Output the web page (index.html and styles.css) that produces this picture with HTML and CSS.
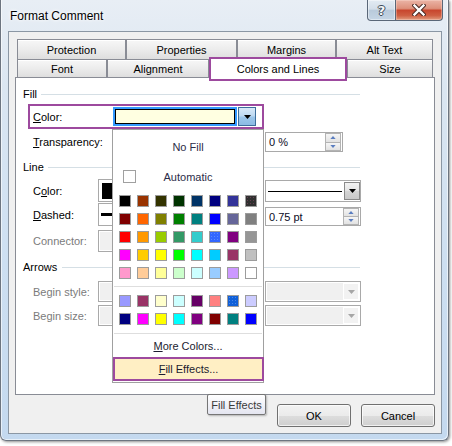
FILE: index.html
```html
<!DOCTYPE html>
<html>
<head>
<meta charset="utf-8">
<title>Format Comment</title>
<link rel="stylesheet" href="styles.css">
</head>
<body>
<div class="window">
  <div class="titlebar">
    <span class="title">Format Comment</span>
    <div class="caption">
      <div class="cbtn help"><span class="qmark">?</span></div>
      <div class="cbtn close">
        <svg width="14" height="12" viewBox="0 0 14 12"><path d="M2.5 1.5 L11.5 10.5 M11.5 1.5 L2.5 10.5" stroke="#4a2a24" stroke-width="4.4" stroke-linecap="square"/><path d="M2.5 1.5 L11.5 10.5 M11.5 1.5 L2.5 10.5" stroke="#ffffff" stroke-width="2.4" stroke-linecap="square"/></svg>
      </div>
    </div>
  </div>

  <div class="client">
    <div class="tabrow row1">
      <div class="tab t-prot">Protection</div>
      <div class="tab t-props">Properties</div>
      <div class="tab t-marg">Margins</div>
      <div class="tab t-alt">Alt Text</div>
    </div>
    <div class="tabrow row2">
      <div class="tab t-font">Font</div>
      <div class="tab t-align">Alignment</div>
      <div class="tab t-col selected">Colors and Lines</div>
      <div class="tab t-size">Size</div>
    </div>

    <div class="panel">
      <div class="section"><span>Fill</span><span class="rule"></span></div>

      <div class="fillrow">
        <span class="lbl lbl-fill"><u>C</u>olor:</span>
        <div class="colorsel">
          <div class="cs-field"><div class="cs-inner"></div></div>
          <div class="cs-btn"><svg width="7" height="4" viewBox="0 0 7 4"><path d="M0 0H7L3.5 4Z" fill="#000"/></svg></div>
        </div>
      </div>

      <div class="row trow">
        <span class="lbl lbl-fill"><u>T</u>ransparency:</span>
        <div class="slider-space"></div>
        <div class="spin s-trans">
          <span class="spin-text">0 %</span>
          <div class="spin-btns">
            <div class="sb"><svg width="7" height="4" viewBox="0 0 7 4"><path d="M0 4H7L3.5 0Z" fill="#5a7dc0"/></svg></div>
            <div class="sb"><svg width="7" height="4" viewBox="0 0 7 4"><path d="M0 0H7L3.5 4Z" fill="#5a7dc0"/></svg></div>
          </div>
        </div>
      </div>

      <div class="section s-line"><span>Line</span><span class="rule"></span></div>

      <div class="row lrow r-color">
        <span class="lbl">C<u>o</u>lor:</span>
        <div class="lfield"><div class="blacksw"></div></div>
        <span class="rlbl">Style:</span>
        <div class="dd rf-style">
          <div class="dd-content"><div class="styleline"></div></div>
          <div class="dd-btn"><svg width="7" height="4" viewBox="0 0 7 4"><path d="M0 0H7L3.5 4Z" fill="#000"/></svg></div>
        </div>
      </div>

      <div class="row lrow r-dash">
        <span class="lbl"><u>D</u>ashed:</span>
        <div class="lfield"><div class="dashline"></div></div>
        <span class="rlbl">Weight:</span>
        <div class="spin rf-weight">
          <span class="spin-text">0.75 pt</span>
          <div class="spin-btns">
            <div class="sb"><svg width="7" height="4" viewBox="0 0 7 4"><path d="M0 4H7L3.5 0Z" fill="#5a7dc0"/></svg></div>
            <div class="sb"><svg width="7" height="4" viewBox="0 0 7 4"><path d="M0 0H7L3.5 4Z" fill="#5a7dc0"/></svg></div>
          </div>
        </div>
      </div>

      <div class="row lrow r-conn">
        <span class="lbl dis">Connector:</span>
        <div class="lfield disabled"></div>
      </div>

      <div class="section s-arrows"><span>Arrows</span><span class="rule"></span></div>

      <div class="row lrow r-begin1">
        <span class="lbl dis">Begin style:</span>
        <div class="lfield disabled"></div>
        <span class="rlbl dis">End style:</span>
        <div class="dd disabled rf-dis">
          <div class="dd-content"></div>
          <div class="dd-btn"><svg width="7" height="4" viewBox="0 0 7 4"><path d="M0 0H7L3.5 4Z" fill="#a6a6a6"/></svg></div>
        </div>
      </div>

      <div class="row lrow r-begin2">
        <span class="lbl dis">Begin size:</span>
        <div class="lfield disabled"></div>
        <span class="rlbl dis">End size:</span>
        <div class="dd disabled rf-dis">
          <div class="dd-content"></div>
          <div class="dd-btn"><svg width="7" height="4" viewBox="0 0 7 4"><path d="M0 0H7L3.5 4Z" fill="#a6a6a6"/></svg></div>
        </div>
      </div>
    </div>

    <div class="buttons">
      <button class="btn">OK</button>
      <button class="btn">Cancel</button>
    </div>
  </div>

  <div class="popup">
    <div class="nofill">No Fill</div>
    <div class="auto"><span class="chk"></span><span class="auto-text">Automatic</span></div>
    <div class="grid grid1">
      <span class="sw" style="background-color:#000000"></span>
      <span class="sw" style="background-color:#993300"></span>
      <span class="sw" style="background-color:#333300"></span>
      <span class="sw" style="background-color:#003300"></span>
      <span class="sw" style="background-color:#003366"></span>
      <span class="sw" style="background-color:#000080"></span>
      <span class="sw" style="background-color:#333399"></span>
      <span class="sw dots-dark" style="background-color:#303030"></span>

      <span class="sw" style="background-color:#800000"></span>
      <span class="sw" style="background-color:#ff6600"></span>
      <span class="sw" style="background-color:#808000"></span>
      <span class="sw" style="background-color:#008000"></span>
      <span class="sw" style="background-color:#008080"></span>
      <span class="sw" style="background-color:#0000ff"></span>
      <span class="sw" style="background-color:#666699"></span>
      <span class="sw" style="background-color:#808080"></span>

      <span class="sw" style="background-color:#ff0000"></span>
      <span class="sw" style="background-color:#ff9900"></span>
      <span class="sw" style="background-color:#99cc00"></span>
      <span class="sw" style="background-color:#339966"></span>
      <span class="sw" style="background-color:#33cccc"></span>
      <span class="sw dots-light" style="background-color:#3366ff"></span>
      <span class="sw" style="background-color:#800080"></span>
      <span class="sw" style="background-color:#969696"></span>

      <span class="sw" style="background-color:#ff00ff"></span>
      <span class="sw" style="background-color:#ffcc00"></span>
      <span class="sw" style="background-color:#ffff00"></span>
      <span class="sw" style="background-color:#00ff00"></span>
      <span class="sw" style="background-color:#00ffff"></span>
      <span class="sw" style="background-color:#00ccff"></span>
      <span class="sw" style="background-color:#993366"></span>
      <span class="sw" style="background-color:#c0c0c0"></span>

      <span class="sw" style="background-color:#ff99cc"></span>
      <span class="sw" style="background-color:#ffcc99"></span>
      <span class="sw" style="background-color:#ffff99"></span>
      <span class="sw" style="background-color:#ccffcc"></span>
      <span class="sw" style="background-color:#ccffff"></span>
      <span class="sw" style="background-color:#99ccff"></span>
      <span class="sw" style="background-color:#cc99ff"></span>
      <span class="sw" style="background-color:#ffffff"></span>
    </div>
    <div class="sep"></div>
    <div class="grid grid2">
      <span class="sw" style="background-color:#9999ff"></span>
      <span class="sw" style="background-color:#993366"></span>
      <span class="sw" style="background-color:#ffffcc"></span>
      <span class="sw" style="background-color:#ccffff"></span>
      <span class="sw" style="background-color:#660066"></span>
      <span class="sw" style="background-color:#ff8080"></span>
      <span class="sw dots-light" style="background-color:#1060d8"></span>
      <span class="sw" style="background-color:#ccccff"></span>

      <span class="sw" style="background-color:#000080"></span>
      <span class="sw" style="background-color:#ff00ff"></span>
      <span class="sw" style="background-color:#ffff00"></span>
      <span class="sw" style="background-color:#00ffff"></span>
      <span class="sw" style="background-color:#800080"></span>
      <span class="sw" style="background-color:#800000"></span>
      <span class="sw" style="background-color:#008080"></span>
      <span class="sw" style="background-color:#0000ff"></span>
    </div>
    <div class="sep sep2"></div>
    <div class="menuitem more"><span><u>M</u>ore Colors...</span></div>
    <div class="menuitem fx"><span><u>F</u>ill Effects...</span></div>
  </div>

  <div class="tip">Fill Effects</div>
</div>
</body>
</html>
```

FILE: styles.css
```css
* { box-sizing: border-box; }
html, body { margin: 0; padding: 0; }
body {
  width: 452px;
  height: 446px;
  overflow: hidden;
  background: #ffffff;
  font-family: "Liberation Sans", Arial, sans-serif;
  font-size: 11px;
  color: #000;
}
u { text-underline-offset: 1px; }

.window {
  position: relative;
  width: 449px;
  height: 441px;
  border: 1px solid #6d7580;
  border-top: 0;
  border-radius: 0 0 6px 6px;
  padding: 0 6px 6px 7px;
  background: linear-gradient(#e8eef5 0%, #dbe6f1 20%, #cddff1 60%, #c4d9ef 100%);
  box-shadow: 1px 1px 3px rgba(0,0,0,0.45), inset 1px 0 0 rgba(255,255,255,0.6), inset -1px -1px 0 rgba(255,255,255,0.6);
  display: flex;
  flex-direction: column;
}

/* title bar */
.titlebar {
  height: 31px;
  flex: none;
  display: flex;
  justify-content: space-between;
  align-items: flex-start;
}
.title {
  font-size: 12px;
  line-height: 31px;
  padding: 1px 0 0 2px;
  color: #000;
  text-shadow: 0 0 5px #fff, 0 0 3px #fff;
}
.caption { display: flex; margin-right: -1px; }
.cbtn {
  height: 21px;
  border: 1px solid #5a6778;
  border-top: 0;
  display: flex;
  align-items: center;
  justify-content: center;
}
.help {
  width: 29px;
  border-radius: 0 0 0 4px;
  background: linear-gradient(#e3ebf3 0%, #d3dee9 45%, #b9cadb 52%, #c5d5e5 100%);
  box-shadow: inset 0 0 0 1px rgba(255,255,255,0.45);
}
.qmark {
  font-family: "DejaVu Sans", sans-serif;
  font-weight: bold;
  font-size: 13px;
  line-height: 1;
  color: #f4f6f8;
  text-shadow: 1px 0 0 #3e4a58, -1px 0 0 #3e4a58, 0 1px 0 #3e4a58, 0 -1px 0 #3e4a58;
}
.close {
  width: 47px;
  border-left: 0;
  border-radius: 0 0 4px 0;
  background: linear-gradient(#ebb4a6 0%, #dd907b 42%, #c8472e 52%, #cf6043 78%, #e29d80 100%);
  box-shadow: inset 0 0 0 1px rgba(255,230,220,0.35);
}

/* client area */
.client {
  height: 403px;
  flex: none;
  border: 1px solid #8b97a4;
  background: #f0f0f0;
  padding: 7px 6px 0 6px;
  display: flex;
  flex-direction: column;
}

.tabrow { display: flex; margin: 0 2px; flex: none; }
.row1 { height: 20px; }
.row2 { height: 18px; }
.tab {
  border: 1px solid #898c95;
  border-bottom: 0;
  background: linear-gradient(#f7f7f7 0%, #ececec 50%, #dedede 100%);
  box-shadow: inset 0 1px 0 #fff;
  display: flex;
  align-items: center;
  justify-content: center;
  padding-top: 1px;
}
.t-prot { width: 109px; }
.t-props { width: 111px; }
.t-marg { width: 99px; }
.t-alt { width: 97px; }
.t-font { width: 90px; }
.t-align { width: 102px; }
.t-col { width: 138px; }
.t-size { width: 86px; }
.tab.selected {
  height: 24px;
  margin-top: -2px;
  border: 2px solid #9d4a9e;
  background: #fff;
  box-shadow: none;
  z-index: 2;
  padding-top: 0;
  padding-bottom: 1px;
}

/* panel */
.panel {
  height: 318px;
  flex: none;
  border: 1px solid #898c95;
  background: #fff;
  padding: 9px 0 0 7px;
  display: flex;
  flex-direction: column;
}
.section {
  display: flex;
  align-items: center;
  height: 14px;
  width: 337px;
  flex: none;
}
.section .rule {
  flex: 1;
  height: 1px;
  background: #d5dfe5;
  margin-left: 4px;
}
.s-line { margin-top: 8px; }
.s-arrows { margin-top: 8px; }
.s-arrows .rule { margin-left: 5px; }

.lbl { flex: none; width: 65px; }
.lbl-fill { width: 80px; }
.dis { color: #7b7b7b; }

.fillrow {
  display: flex;
  align-items: center;
  margin: 3px 0 0 5px;
  width: 236px;
  height: 25px;
  border: 2px solid #9d4a9e;
  padding-left: 3px;
  flex: none;
}
.colorsel { display: flex; width: 143px; height: 19px; gap: 1px; }
.cs-field {
  width: 124px;
  border: 2px solid #3399ff;
}
.cs-inner {
  height: 100%;
  border: 1px solid #000;
  background: #ffffe1;
}
.cs-btn {
  width: 18px;
  border: 1px solid #3c6e9c;
  background: linear-gradient(#d8e9f8 0%, #bcd8f1 48%, #9cc6ea 52%, #8bbbe4 100%);
  display: flex;
  align-items: center;
  justify-content: center;
}

.row { display: flex; margin-left: 10px; flex: none; }
.trow { margin-top: 3px; height: 20px; align-items: center; }
.slider-space { width: 152px; flex: none; }

.spin {
  display: flex;
  border: 1px solid #a9a9a9;
  background: #fff;
  flex: none;
}
.s-trans { width: 78px; height: 20px; }
.spin-text { flex: 1; padding-left: 3px; align-self: center; color: #0b0b26; }
.spin-btns {
  width: 16px;
  margin: 0 1px 0 0;
  display: flex;
  flex-direction: column;
}
.sb {
  flex: 1;
  border: 1px solid #b3b3b3;
  background: linear-gradient(#f6f6f6, #e2e2e2);
  display: flex;
  align-items: center;
  justify-content: center;
}
.sb + .sb { border-top: 0; }
.sb svg { width: 6px; height: 3px; }

.lrow { align-items: flex-end; }
.lrow .lbl { align-self: center; }
.rlbl { width: 64px; padding-left: 8px; align-self: center; flex: none; }
.lfield {
  width: 103px;
  height: 100%;
  border: 1px solid #a9a9a9;
  background: #fff;
  flex: none;
  display: flex;
  align-items: center;
  padding: 0 2px;
}
.lfield.disabled { background: #f0f0f0; box-shadow: inset 0 0 0 1px #fff; }
.r-color { margin-top: 5px; height: 23px; }
.r-dash { margin-top: 1px; height: 23px; }
.r-conn { margin-top: 4px; height: 22px; }
.r-begin1 { margin-top: 7px; height: 21px; }
.r-begin2 { margin-top: 3px; height: 21px; }

.blacksw { width: 100%; height: 16px; background: #000; margin-left: 1px; }
.dashline { width: 100%; height: 3px; background: #000; }

.dd {
  width: 96px;
  display: flex;
  border: 1px solid #a9a9a9;
  background: #fff;
  flex: none;
}
.rf-style { height: 22px; }
.rf-dis { height: 21px; }
.dd-content { flex: 1; display: flex; align-items: center; padding-left: 2px; padding-right: 1px; }
.styleline { width: 100%; height: 1px; background: #000; }
.dd-btn {
  width: 16px;
  margin: 1px 0 1px 1px;
  border: 1px solid #8a8a8a;
  background: linear-gradient(#f2f2f2 0%, #e4e4e4 48%, #d4d4d4 52%, #c9c9c9 100%);
  display: flex;
  align-items: center;
  justify-content: center;
}
.rf-weight { width: 96px; height: 19px; }
.dd.disabled { background: #f0f0f0; box-shadow: inset 0 0 0 1px #fff; }
.dd.disabled .dd-btn {
  border: 1px solid #fff;
  background: #f2f2f2;
  margin: 1px;
}

/* buttons */
.buttons {
  display: flex;
  justify-content: flex-end;
  gap: 10px;
  margin-top: 9px;
  flex: none;
}
.btn {
  width: 74px;
  height: 23px;
  padding: 0;
  border: 1px solid #707070;
  border-radius: 3px;
  background: linear-gradient(#f2f2f2 0%, #ebebeb 50%, #dddddd 51%, #cfcfcf 100%);
  box-shadow: inset 0 0 0 1px rgba(255,255,255,0.7);
  font-family: "Liberation Sans", Arial, sans-serif;
  font-size: 11px;
  color: #000;
}

/* colour popup */
.popup {
  position: absolute;
  left: 111px;
  top: 129px;
  width: 152px;
  height: 254px;
  border: 1px solid #a0a0a0;
  background: #fff;
  display: flex;
  flex-direction: column;
  z-index: 5;
}
.nofill {
  height: 34px;
  display: flex;
  align-items: center;
  justify-content: center;
  color: #2c2c48;
}
.auto { height: 25px; display: flex; align-items: center; }
.chk {
  width: 13px;
  height: 13px;
  border: 1px solid #a0a0a0;
  margin-left: 10px;
  flex: none;
  background: #fff;
}
.auto-text { flex: 1; text-align: center; margin-right: 23px; color: #2c2c48; }
.grid {
  display: grid;
  grid-template-columns: repeat(8, 12px);
  grid-auto-rows: 12px;
  gap: 6px;
  padding-left: 6px;
}
.grid1 { margin-top: 6px; }
.grid2 { margin-top: 8px; }
.sw { display: block; width: 12px; height: 12px; border: 1px solid #9c9c9c; }
.dots-dark {
  background-image: radial-gradient(circle, rgba(170,80,120,0.45) 0.5px, transparent 0.8px);
  background-size: 3px 3px;
}
.dots-light {
  background-image: radial-gradient(circle, rgba(140,180,255,0.45) 0.5px, transparent 0.8px);
  background-size: 3px 3px;
}
.sep { height: 1px; background: #dedede; margin: 7px 1px 0 1px; flex: none; }
.sep2 { margin-top: 8px; }
.menuitem {
  display: flex;
  align-items: center;
  justify-content: center;
  color: #1c1c30;
  flex: none;
}
.more { height: 23px; }
.fx {
  height: 24px;
  border: 2px solid #9d4a9e;
  background: #ffefc4;
  margin-right: -1px;
}

/* tooltip */
.tip {
  position: absolute;
  left: 206px;
  top: 394px;
  width: 59px;
  height: 21px;
  border: 1px solid #767676;
  border-radius: 2px;
  background: linear-gradient(#ffffff, #e4e5f0);
  box-shadow: 1px 1px 2px rgba(0,0,0,0.25);
  color: #3a3a3a;
  font-size: 11px;
  display: flex;
  align-items: center;
  justify-content: center;
  z-index: 6;
}
```
